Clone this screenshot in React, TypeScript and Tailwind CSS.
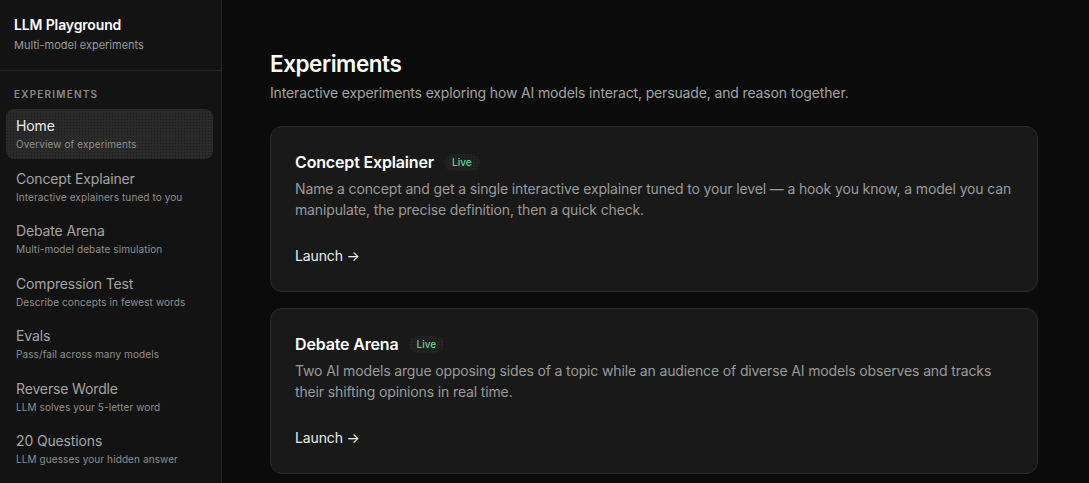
const navItems = [
  { name: "Home", desc: "Overview of experiments", active: true },
  { name: "Concept Explainer", desc: "Interactive explainers tuned to you" },
  { name: "Debate Arena", desc: "Multi-model debate simulation" },
  { name: "Compression Test", desc: "Describe concepts in fewest words" },
  { name: "Evals", desc: "Pass/fail across many models" },
  { name: "Reverse Wordle", desc: "LLM solves your 5-letter word" },
  { name: "20 Questions", desc: "LLM guesses your hidden answer" },
];

const experiments = [
  {
    name: "Concept Explainer",
    desc: "Name a concept and get a single interactive explainer tuned to your level — a hook you know, a model you can manipulate, the precise definition, then a quick check.",
  },
  {
    name: "Debate Arena",
    desc: "Two AI models argue opposing sides of a topic while an audience of diverse AI models observes and tracks their shifting opinions in real time.",
  },
];

export default function App() {
  return (
    <div className="flex h-[483px] overflow-hidden bg-[#0b0b0b] font-['Inter',sans-serif] antialiased">
      {/* Sidebar */}
      <aside className="w-[222px] shrink-0 border-r border-[#262626] bg-[#131313]">
        <div className="border-b border-[#262626] px-3.5 pt-[15px] pb-[17px]">
          <p className="text-sm font-semibold leading-5 tracking-[-0.01em] text-white">LLM Playground</p>
          <p className="mt-0.5 text-[11px] leading-4 text-[#9a9a9a]">Multi-model experiments</p>
        </div>
        <div className="pt-[15px] pl-1.5 pr-2">
          <p className="mb-[7px] px-2 text-[10px] font-semibold uppercase leading-4 tracking-[0.12em] text-[#8a8a8a]">
            Experiments
          </p>
          <nav className="flex flex-col gap-[2.5px]">
            {navItems.map((item) => (
              <div
                key={item.name}
                className={
                  item.active
                    ? "rounded-lg bg-[#2a2a2a] bg-[radial-gradient(circle,#1c1c1c_0.8px,transparent_1px)] bg-[length:3px_3px] px-2.5 py-[7px]"
                    : "rounded-lg px-2.5 py-[7px]"
                }
              >
                <p
                  className={
                    item.active
                      ? "text-sm leading-5 tracking-[-0.01em] text-[#ececec]"
                      : "text-sm leading-5 tracking-[-0.01em] text-[#a3a3a3]"
                  }
                >
                  {item.name}
                </p>
                <p className="text-[10px] leading-4 tracking-[0.01em] text-[#8f8f8f]">{item.desc}</p>
              </div>
            ))}
          </nav>
        </div>
      </aside>

      {/* Main */}
      <main className="flex-1 px-12 pt-12">
        <div className="max-w-3xl">
          <h1 className="text-[22.5px] font-semibold leading-8 tracking-[-0.02em] text-white">Experiments</h1>
          <p className="mt-[3px] text-sm leading-5 tracking-[-0.01em] text-[#a3a3a3]">
            Interactive experiments exploring how AI models interact, persuade, and reason together.
          </p>

          <div className="mt-[23px] space-y-4">
            {experiments.map((exp) => (
              <div
                key={exp.name}
                className="rounded-xl border border-[#2b2b2b] bg-[#191919] px-6 pt-[25px] pb-[25px]"
              >
                <div className="flex h-5 items-center gap-2.5">
                  <h2 className="text-base font-semibold leading-5 tracking-[-0.01em] text-white">{exp.name}</h2>
                  <span className="rounded-full bg-[#222] bg-[radial-gradient(circle,#151515_0.8px,transparent_1px)] bg-[length:3px_3px] px-2 text-[10px] font-medium leading-[17px] text-[#5fd68a]">
                    Live
                  </span>
                </div>
                <p className="mt-1.5 text-sm leading-[21px] tracking-[-0.01em] text-[#9a9a9a]">{exp.desc}</p>
                <p className="mt-[26px] text-sm leading-5 tracking-[-0.01em] text-[#ececec]">Launch →</p>
              </div>
            ))}
          </div>
        </div>
      </main>
    </div>
  );
}
